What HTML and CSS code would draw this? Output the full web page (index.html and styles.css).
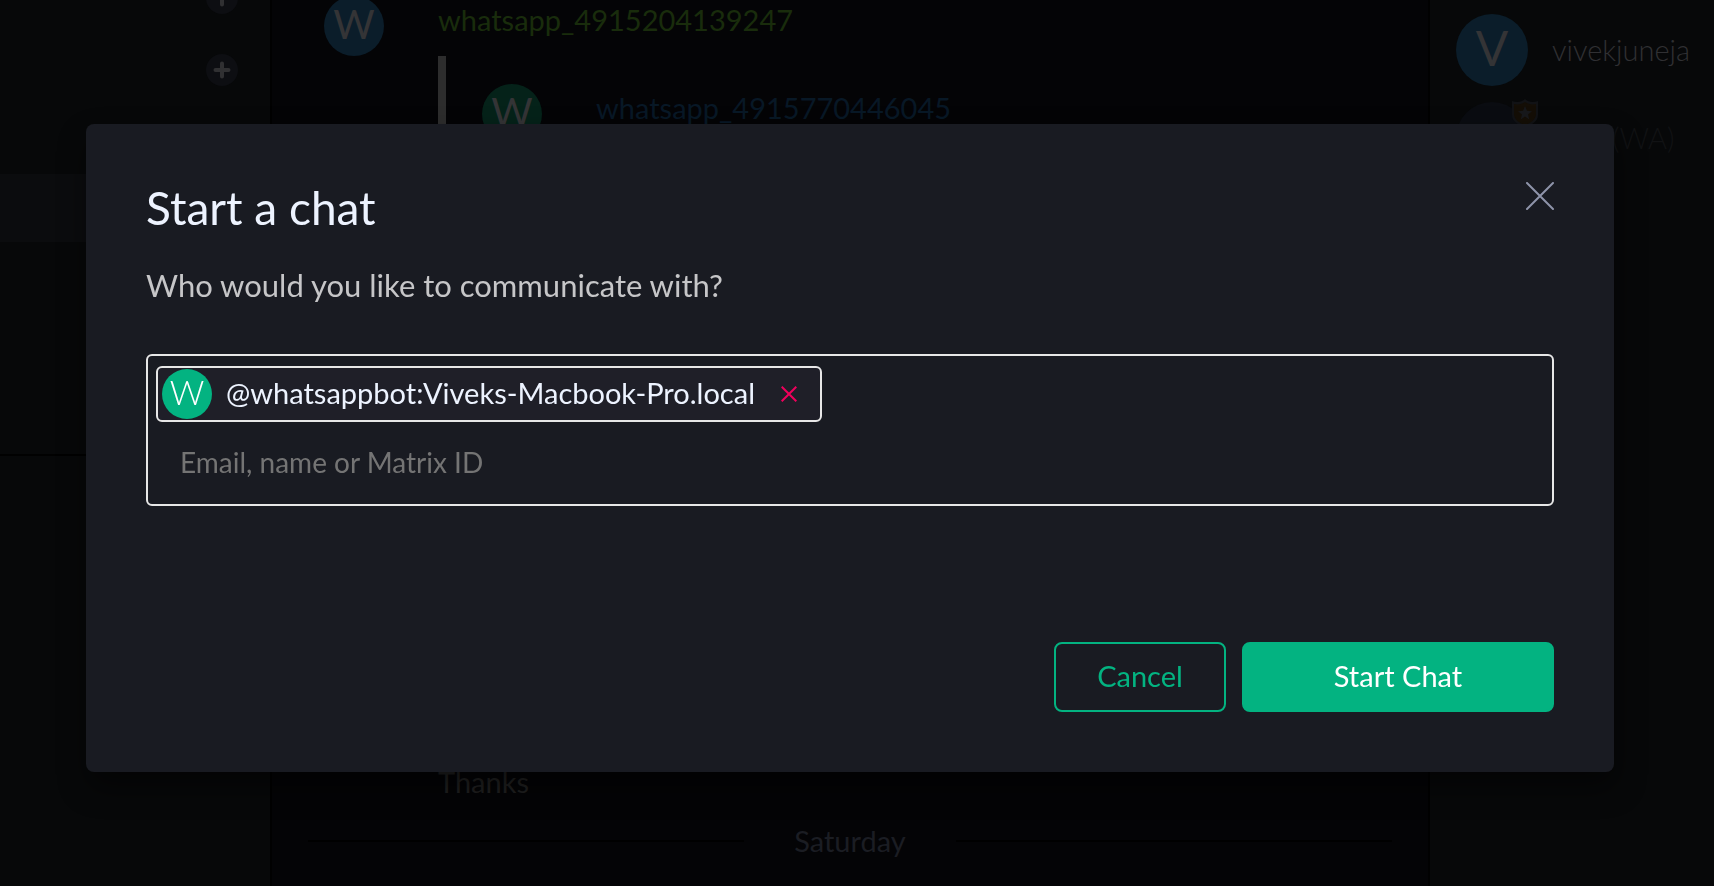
FILE: index.html
```
<!DOCTYPE html>
<html lang="en">
<head>
<meta charset="utf-8">
<title>Start a chat</title>
<link rel="stylesheet" href="styles.css">
</head>
<body>
<div class="app">
  <aside class="rooms">
    <button class="add" aria-label="Add direct chat"><svg viewBox="0 0 32 32"><path d="M16 9.500v13M9.500 16h13"/></svg></button>
    <button class="add" aria-label="Add room"><svg viewBox="0 0 32 32"><path d="M16 9.500v13M9.500 16h13"/></svg></button>
    <div class="room-selected"></div>
    <hr class="room-rule">
  </aside>
  <main class="timeline">
    <article class="message">
      <span class="avatar blue">W</span>
      <div class="message-body">
        <div class="sender lime">whatsapp_4915204139247</div>
        <blockquote class="quote">
          <span class="avatar green">W</span>
          <span class="sender navy">whatsapp_4915770446045</span>
        </blockquote>
        <p class="reply">Thanks</p>
      </div>
    </article>
    <div class="day"><span>Saturday</span></div>
  </main>
  <aside class="members">
    <div class="member">
      <span class="avatar large blue">V</span>
      <span class="member-name">vivekjuneja</span>
    </div>
    <div class="member faded">
      <span class="avatar large slate">
        <svg class="shield" viewBox="0 0 26 28"><path class="shield-edge" d="M13 0c3 3 8 4 13 2v14c0 6-6 10-13 12C6 26 0 22 0 16V2c5 2 10 1 13-2z"/><path class="shield-fill" d="M13 3c3 2 7 3 11 2v10c0 5-5 9-11 11C7 24 2 20 2 15V5c4 1 8 0 11-2z"/><path class="shield-star" d="M13 7l2 4.800 5 .4-4 3.200 1.300 5-4.300-2.800-4.300 2.800 1.300-5-4-3.200 5-.4z"/></svg>
      </span>
      <span class="member-name tail">(WA)</span>
    </div>
  </aside>
</div>
<div class="overlay">
  <section class="dialog" role="dialog" aria-labelledby="title">
    <header class="dialog-head">
      <h1 id="title">Start a chat</h1>
      <button class="close" aria-label="Close"><svg viewBox="0 0 28 28"><path d="M1 1l26 26M27 1L1 27"/></svg></button>
    </header>
    <label class="prompt" for="who">Who would you like to communicate with?</label>
    <div class="field">
      <span class="pill">
        <span class="pill-avatar">W</span>
        <span class="pill-name">@whatsappbot:Viveks-Macbook-Pro.local</span>
        <button class="remove" aria-label="Remove"><svg viewBox="0 0 16 16"><path d="M.7.7l14.600 14.600M15.300.7L.7 15.300"/></svg></button>
      </span>
      <input id="who" class="entry" type="text" placeholder="Email, name or Matrix ID">
    </div>
    <footer class="actions">
      <button class="btn cancel">Cancel</button>
      <button class="btn primary">Start Chat</button>
    </footer>
  </section>
</div>
</body>
</html>
```
FILE: styles.css
```
* { box-sizing: border-box; }
body {
  margin: 0;
  background: #040406;
  color: #2d2d2f;
  font: 29px/36px Lato, "Open Sans", sans-serif;
}
button, input { font: inherit; color: inherit; background: none; border: 0; padding: 0; }
svg { display: block; fill: none; stroke: currentColor; }

.app { display: grid; grid-template-columns: 272px 1fr 286px; height: 100vh; overflow: hidden; }

.rooms { background: #070809; border-right: 2px solid #010101; }
.add {
  display: block;
  width: 32px;
  height: 32px;
  margin: 40px 32px 0 auto;
  border-radius: 50%;
  background: #0d0e12;
  color: #303032;
}
.add:first-child { margin-top: -18px; }
.add svg { stroke-width: 4; stroke-linecap: round; }
.room-selected { height: 68px; margin-top: 88px; background: #0b0c0e; }
.room-rule { margin: 212px 0 0; border: 0; border-top: 2px solid #010101; }

.timeline { padding: 0 36px; overflow: hidden; }
.message { display: flex; gap: 54px; padding-left: 16px; }
.message > .avatar { margin-top: -4px; }
.message-body { flex: 1; padding-top: 2px; }
.avatar {
  position: relative;
  flex: none;
  width: 60px;
  height: 60px;
  border-radius: 50%;
  color: #343436;
  font-size: 40px;
  line-height: 56px;
  text-align: center;
}
.blue { background: #0b1d2a; }
.green { background: #052219; }
.slate { background: #0a0c11; }
.lime { color: #192c0c; }
.navy { color: #081826; }
.quote {
  display: flex;
  gap: 54px;
  height: 640px;
  margin: 18px 0 68px;
  padding: 28px 0 0 36px;
  border-left: 8px solid #2d2d2d;
}
.quote .sender { padding-top: 6px; }
.reply { margin: 0; color: #202020; }
.day { display: flex; align-items: center; gap: 50px; margin-top: 23px; color: #1b1d23; }
.day::before, .day::after { content: ""; flex: 1; height: 2px; background: #000; }

.members { padding: 14px 20px 0 26px; background: #070809; border-left: 2px solid #010101; }
.member { display: flex; align-items: center; gap: 24px; margin-bottom: 16px; }
.member-name { color: #303033; font-weight: 300; }
.large { width: 72px; height: 72px; font-size: 48px; line-height: 68px; }
.faded .member-name { color: #111214; }
.tail { padding-left: 60px; }
.shield { position: absolute; top: -3px; right: -10px; width: 26px; stroke: none; }
.shield-edge { fill: #111215; }
.shield-fill { fill: #140e06; }
.shield-star { fill: #17181b; }

.overlay { position: fixed; inset: 0; padding: 124px 100px 0 86px; }
.dialog {
  padding: 54px 60px 60px;
  border-radius: 8px;
  background: #191b22;
  color: #edf3ff;
  box-shadow: 2px 15px 30px rgba(0, 0, 0, .48);
}
.dialog-head { display: flex; justify-content: space-between; align-items: flex-start; }
h1 { margin: 0; font-size: 46px; font-weight: 400; line-height: 60px; }
.close { width: 28px; height: 28px; margin-top: 4px; color: #8e94aa; }
.close svg { stroke-width: 2; stroke-linecap: round; }
.prompt { display: block; margin-top: 27px; color: #c6c6c8; font-size: 31px; line-height: 40px; }
.field {
  margin-top: 49px;
  padding: 10px 8px 22px;
  border: 2px solid #e7e7e7;
  border-radius: 6px;
}
.pill {
  display: inline-flex;
  align-items: center;
  height: 56px;
  padding: 0 23px 0 4px;
  border: 2px solid #e7e7e7;
  border-radius: 6px;
  background: #1f1f28;
  vertical-align: top;
}
.pill-avatar {
  width: 50px;
  height: 50px;
  margin-right: 14px;
  border-radius: 50%;
  background: #03b381;
  color: #fff;
  font-size: 34px;
  font-weight: 300;
  line-height: 46px;
  text-align: center;
}
.pill-name { padding-bottom: 2px; }
.remove { width: 16px; height: 16px; margin-left: 26px; color: #f0005c; }
.remove svg { stroke-width: 2; }
.entry { display: block; width: 100%; height: 40px; margin-top: 20px; padding: 0 24px; outline: 0; font-size: 28px; }
.entry::placeholder { color: #747474; opacity: 1; }
.actions { display: flex; justify-content: flex-end; gap: 16px; margin-top: 136px; }
.btn { height: 70px; padding-bottom: 2px; border: 2px solid #03b381; border-radius: 8px; color: #03b381; }
.cancel { width: 172px; }
.primary { width: 312px; background: #03b381; color: #fff; }
```
